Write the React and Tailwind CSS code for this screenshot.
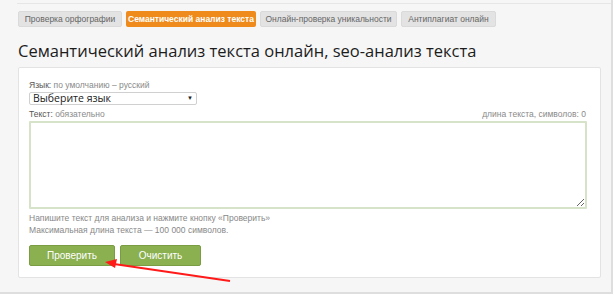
export default function App() {
  const tabs = [
    { label: "Проверка орфографии", active: false, w: "w-[104px]" },
    { label: "Семантический анализ текста", active: true, w: "w-[130px]" },
    { label: "Онлайн-проверка уникальности", active: false, w: "w-[137px]" },
    { label: "Антиплагиат онлайн", active: false, w: "w-[95px]" },
  ];

  return (
    <div className="relative w-[613px] h-[294px] overflow-hidden bg-[#f6f6f6] border-r-2 border-b-2 border-[#dedede] font-['Liberation_Sans',sans-serif]">
      {/* top rule */}
      <div className="ml-[17px] mt-[3px] h-px bg-[#e6e6e6]" />

      {/* Tabs */}
      <div className="flex gap-[4px] pl-[18px] pt-[7px]">
        {tabs.map((t) => (
          <div
            key={t.label}
            className={`${t.w} h-[16px] flex items-center justify-center rounded-[2px] text-[8.5px] ${
              t.active
                ? "bg-[#ee8b1c] text-white font-bold"
                : "bg-[#e3e3e3] text-[#666] border border-[#dadada]"
            }`}
          >
            {t.label}
          </div>
        ))}
      </div>

      {/* Heading */}
      <h1 className="pl-[18px] pt-[13px] text-[16.5px] leading-[22px] text-[#1c1c1c] font-['Open_Sans',sans-serif]">
        Семантический анализ текста онлайн, seo-анализ текста
      </h1>

      {/* Card */}
      <div className="ml-[18px] mt-[5px] w-[583px] h-[211px] bg-white border border-[#e3e3e3] rounded-[2px] px-[10px] pt-[12px]">
        <div className="text-[8.5px] leading-[11px]">
          <span className="text-[#555]">Язык:</span>{" "}
          <span className="text-[#8a8a8a]">по умолчанию – русский</span>
        </div>
        <div className="mt-[1px] w-[168px] h-[13px] border border-[#d0d0d0] rounded-[2px] flex items-center justify-between px-[3px] text-[10.5px] text-[#222] font-['Open_Sans',sans-serif]">
          <span>Выберите язык</span>
          <span className="text-[6px] text-[#222]">▼</span>
        </div>

        <div className="mt-[4px] flex justify-between text-[8.5px] leading-[11px] pr-[4px]">
          <div>
            <span className="text-[#555]">Текст:</span>{" "}
            <span className="text-[#8a8a8a]">обязательно</span>
          </div>
          <div className="text-[#8a8a8a]">длина текста, символов: 0</div>
        </div>

        <textarea className="mt-[1px] block w-[558px] h-[88px] border-2 border-[#d6e3c8] rounded-[1px] resize-y outline-none" />

        <div className="mt-[3px] text-[8.5px] leading-[12px] text-[#888]">
          <div>Напишите текст для анализа и нажмите кнопку «Проверить»</div>
          <div>Максимальная длина текста — 100 000 символов.</div>
        </div>

        <div className="mt-[9px] flex gap-[5px]">
          <button className="w-[86px] h-[21px] bg-[#8bb050] border border-[#7a9d44] rounded-[2px] text-white text-[10px]">
            Проверить
          </button>
          <button className="w-[81px] h-[21px] bg-[#8bb050] border border-[#7a9d44] rounded-[2px] text-white text-[10px]">
            Очистить
          </button>
        </div>
      </div>

      {/* Red arrow */}
      <svg className="absolute left-0 top-0 pointer-events-none" width="613" height="294">
        <line x1="230" y1="281" x2="114" y2="264" stroke="#ff1a1a" strokeWidth="2" />
        <polygon points="105,262 117,259 115,268" fill="#ff1a1a" />
      </svg>
    </div>
  );
}
